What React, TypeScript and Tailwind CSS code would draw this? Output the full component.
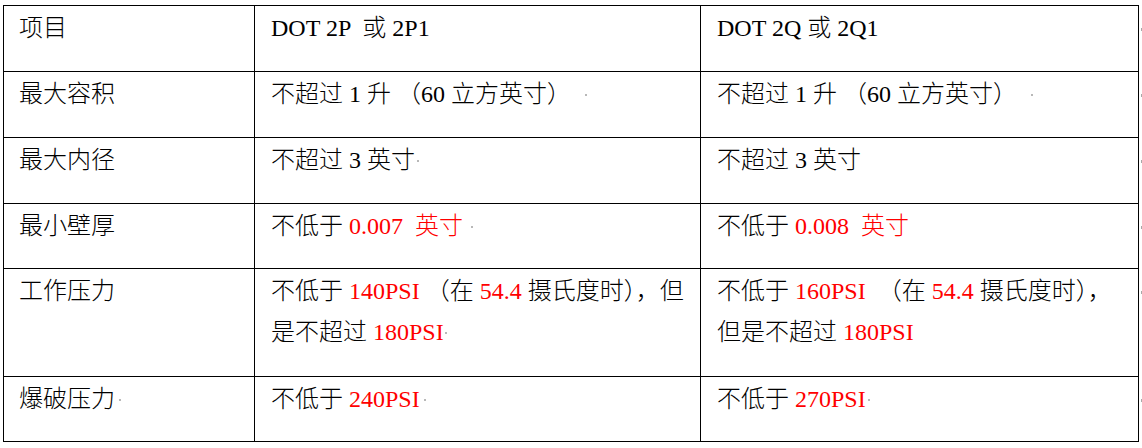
import type { ReactNode } from "react";

type Row = {
  label: ReactNode;
  a: ReactNode;
  b: ReactNode;
  h: string;
};

function Red({ children }: { children: ReactNode }) {
  return <span className="text-[#ff0000]">{children}</span>;
}

function Mark({ className = "" }: { className?: string }) {
  return <span className={`inline-block h-[2px] w-[2px] bg-[#b8b8b8] align-[6px] ${className}`} />;
}

const rows: Row[] = [
  { label: "项目", a: "DOT 2P  或 2P1", b: "DOT 2Q 或 2Q1", h: "h-[66px]" },
  {
    label: "最大容积",
    a: (
      <>
        不超过 1 升 （60 立方英寸）
        <Mark className="ml-[14px]" />
      </>
    ),
    b: (
      <>
        不超过 1 升 （60 立方英寸）
        <Mark className="ml-[14px]" />
      </>
    ),
    h: "h-[66px]",
  },
  {
    label: "最大内径",
    a: (
      <>
        不超过 3 英寸
        <Mark className="ml-[2px]" />
      </>
    ),
    b: "不超过 3 英寸",
    h: "h-[66px]",
  },
  {
    label: "最小壁厚",
    a: (
      <>
        不低于 <Red>0.007  英寸</Red>
        <Mark className="ml-[8px]" />
      </>
    ),
    b: (
      <>
        不低于 <Red>0.008  英寸</Red>
      </>
    ),
    h: "h-[65px]",
  },
  {
    label: "工作压力",
    a: (
      <>
        不低于 <Red>140PSI</Red> （在 <Red>54.4</Red> 摄氏度时），但
        <br />
        是不超过 <Red>180PSI</Red>
        <Mark className="ml-[1px]" />
      </>
    ),
    b: (
      <>
        不低于 <Red>160PSI</Red>  （在 <Red>54.4</Red> 摄氏度时），
        <br />
        但是不超过 <Red>180PSI</Red>
      </>
    ),
    h: "h-[108px]",
  },
  {
    label: (
      <>
        爆破压力
        <Mark className="ml-[4px]" />
      </>
    ),
    a: (
      <>
        不低于 <Red>240PSI</Red>
        <Mark className="ml-[4px]" />
      </>
    ),
    b: (
      <>
        不低于 <Red>270PSI</Red>
        <Mark className="ml-[2px]" />
      </>
    ),
    h: "h-[65px]",
  },
];

const cell = "border border-black align-top pt-[2px] pr-[2px] whitespace-pre-wrap";

export default function App() {
  return (
    <div
      className="flex bg-white pt-[5px] pl-[3px] text-[24px] leading-[41px] font-light text-black"
      style={{ fontFamily: '"Liberation Serif", "Noto Sans CJK SC", serif' }}
    >
      <table className="w-[1135px] table-fixed border-collapse">
        <colgroup>
          <col className="w-[251px]" />
          <col className="w-[446px]" />
          <col className="w-[438px]" />
        </colgroup>
        <tbody>
          {rows.map((row, i) => (
            <tr key={i} className={row.h}>
              <td className={`${cell} pl-[15px]`}>{row.label}</td>
              <td className={`${cell} pl-[16px]`}>{row.a}</td>
              <td className={`${cell} pl-[16px]`}>{row.b}</td>
            </tr>
          ))}
        </tbody>
      </table>
      <div className="flex flex-col">
        {rows.map((row, i) => (
          <div key={i} className={`${row.h} pt-[23px] pl-[2px]`}>
            <div className="h-[3px] w-[2px] bg-[#a8a8a8]" />
          </div>
        ))}
      </div>
    </div>
  );
}
